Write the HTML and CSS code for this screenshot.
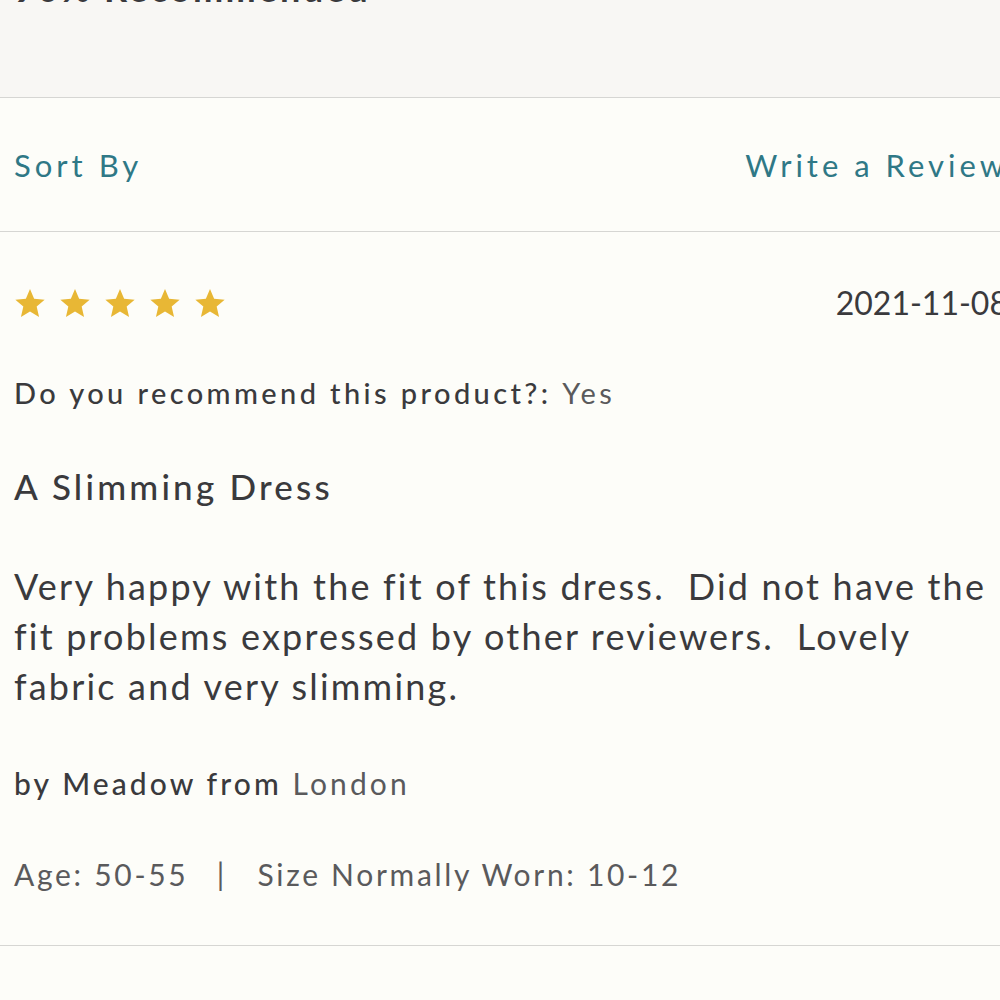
FILE: index.html
```html
<!DOCTYPE html>
<html lang="en">
<head>
    <meta charset="UTF-8">
    <meta name="viewport" content="width=device-width, initial-scale=1.0">
    <title>Reviews</title>
    <link rel="stylesheet" href="styles.css">
</head>
<body>
    <div class="page">
        <div class="summary">
            <div class="summary-text">90% Recommended</div>
        </div>

        <div class="toolbar">
            <a class="link" href="#">Sort By</a>
            <a class="link" href="#">Write a Review</a>
        </div>

        <div class="review">
            <div class="review-head">
                <div class="stars">
                    <svg class="star" viewBox="0 0 24 24"><path d="M12 1.5l3.1 7.3 7.9.7-6 5.2 1.8 7.8L12 18.4l-6.8 4.1L7 14.7 1 9.5l7.9-.7z"/></svg>
                    <svg class="star" viewBox="0 0 24 24"><path d="M12 1.5l3.1 7.3 7.9.7-6 5.2 1.8 7.8L12 18.4l-6.8 4.1L7 14.7 1 9.5l7.9-.7z"/></svg>
                    <svg class="star" viewBox="0 0 24 24"><path d="M12 1.5l3.1 7.3 7.9.7-6 5.2 1.8 7.8L12 18.4l-6.8 4.1L7 14.7 1 9.5l7.9-.7z"/></svg>
                    <svg class="star" viewBox="0 0 24 24"><path d="M12 1.5l3.1 7.3 7.9.7-6 5.2 1.8 7.8L12 18.4l-6.8 4.1L7 14.7 1 9.5l7.9-.7z"/></svg>
                    <svg class="star" viewBox="0 0 24 24"><path d="M12 1.5l3.1 7.3 7.9.7-6 5.2 1.8 7.8L12 18.4l-6.8 4.1L7 14.7 1 9.5l7.9-.7z"/></svg>
                </div>
                <div class="date">2021-11-08</div>
            </div>

            <div class="recommend">Do you recommend this product?: <span class="value">Yes</span></div>

            <h3 class="title">A Slimming Dress</h3>

            <p class="body">Very happy with the fit of this dress.&nbsp; Did not have the fit problems expressed by other reviewers.&nbsp; Lovely fabric and very slimming.</p>

            <div class="author">by Meadow from <span class="value">London</span></div>

            <div class="meta">Age: 50-55 <span class="sep">|</span> Size Normally Worn: 10-12</div>
        </div>
    </div>
</body>
</html>
```

FILE: styles.css
```css
:root {
    --bg-color: #fdfdf9;
    --panel-bg: #f8f7f4;
    --line-color: #d6d6d3;
    --text-color: #3a3a3d;
    --muted-color: #5a5a5c;
    --teal: #2f7886;
    --gold: #e8b735;
}

body {
    margin: 0;
    height: 1000px;
    background-color: var(--bg-color);
    font-family: 'Lato', 'Noto Sans', sans-serif;
    color: var(--text-color);
    overflow: hidden;
}

.page {
    width: 1022px;
}

/* rating summary panel, scrolled mostly out of view */
.summary {
    height: 97px;
    background: var(--panel-bg);
    border-bottom: 1px solid var(--line-color);
    padding: 0 14px;
    overflow: hidden;
}
.summary-text {
    margin-top: -34px;
    font-size: 36px;
    font-weight: bold;
    letter-spacing: 2.5px;
}

.toolbar {
    display: flex;
    justify-content: space-between;
    align-items: center;
    height: 133px;
    padding: 0 14px;
    border-bottom: 1px solid var(--line-color);
}
.link {
    color: var(--teal);
    text-decoration: none;
    font-size: 31px;
    letter-spacing: 4px;
}

.review {
    padding: 55px 14px 53px;
    border-bottom: 1px solid var(--line-color);
}

.review-head {
    display: flex;
    justify-content: space-between;
    align-items: center;
}
.stars {
    display: flex;
    gap: 13px;
}
.star {
    width: 32px;
    height: 32px;
    fill: var(--gold);
}
.date {
    font-size: 32px;
    line-height: 32px;
}

.recommend {
    margin-top: 56px;
    font-size: 29px;
    line-height: 36px;
    font-weight: 500;
    letter-spacing: 3.4px;
}
.value {
    font-weight: normal;
    color: var(--muted-color);
}

.title {
    margin: 55px 0 0;
    font-size: 35px;
    line-height: 40px;
    font-weight: 500;
    letter-spacing: 3.2px;
}

.body {
    margin: 55px 0 0;
    font-size: 36px;
    line-height: 50px;
    letter-spacing: 2.2px;
}

.author {
    margin-top: 54px;
    font-size: 30px;
    line-height: 36px;
    font-weight: 500;
    letter-spacing: 3.1px;
}

.meta {
    margin-top: 55px;
    font-size: 30px;
    line-height: 36px;
    color: var(--muted-color);
    letter-spacing: 2.7px;
}
.sep {
    margin: 0 20px 0 18px;
}
```
